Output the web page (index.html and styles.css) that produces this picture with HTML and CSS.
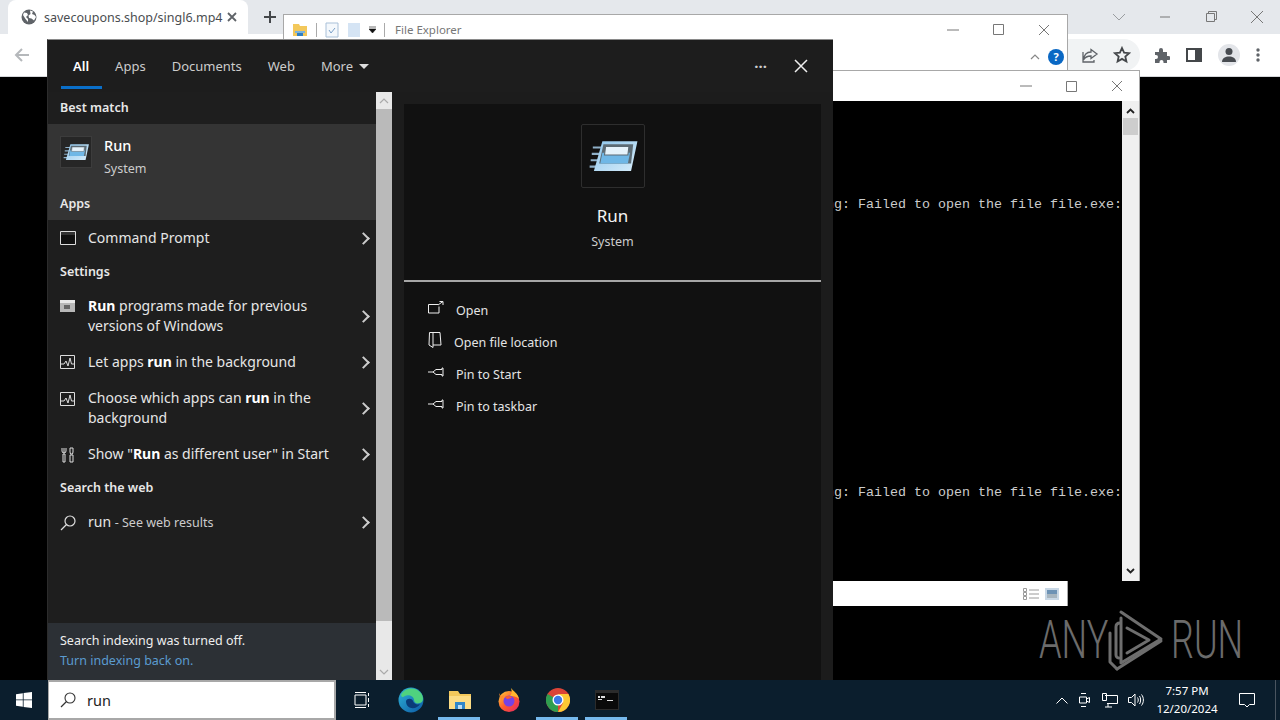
FILE: index.html
```html
<!DOCTYPE html>
<html lang="en">
<head>
  <meta charset="UTF-8">
  <title>Run - Windows Search</title>
  <link rel="stylesheet" href="styles.css">
</head>
<body>
<div class="desktop">

  <!-- browser behind everything -->
  <div class="chrome">
    <div class="tabstrip">
      <div class="tab">
        <svg class="tab-globe" width="16" height="16" viewBox="0 0 16 16"><circle cx="8" cy="8" r="7.5" fill="#5f6368"/><path d="M3 3.5l3 .5 1 2-2 2 2 2v3L4.500 10 2 6zM9 1.500l3 1-1 2.500 2.500 1L15 8l-2 3.500-2.500-2L8 9 7.500 6.500 9.500 5z" fill="#fff"/></svg>
        <span class="tab-title">savecoupons.shop/singl6.mp4</span>
        <svg class="tab-close" width="10" height="10" viewBox="0 0 10 10"><path d="M1 1l8 8M9 1l-8 8" stroke="#5f6368" stroke-width="1.800"/></svg>
      </div>
      <svg class="tab-new" width="14" height="14" viewBox="0 0 14 14"><path d="M7 1v12M1 7h12" stroke="#44474a" stroke-width="2"/></svg>
      <div class="win-btns">
        <svg width="14" height="14" viewBox="0 0 14 14"><path d="M1 4l6 6 6-6" fill="none" stroke="#9a9da0"/></svg>
        <svg width="14" height="14" viewBox="0 0 14 14"><path d="M2 7h10" stroke="#777"/></svg>
        <svg width="14" height="14" viewBox="0 0 14 14"><path d="M2.500 3.500h8v8h-8zM4.500 3.500v-2h8v8h-2" fill="none" stroke="#777"/></svg>
        <svg width="14" height="14" viewBox="0 0 14 14"><path d="M1 1l12 12M13 1L1 13" stroke="#777"/></svg>
      </div>
    </div>
    <div class="toolbar">
      <svg class="back" width="16" height="16" viewBox="0 0 16 16"><path d="M15 8H2M8 2L2 8l6 6" fill="none" stroke="#b5b8bb" stroke-width="2"/></svg>
      <div class="omni-end">
        <svg width="18" height="18" viewBox="0 0 18 18"><path d="M10 3.500l6 4.500-6 4.500V10C6 10 4 11 2.500 14 3 9 5.500 6 10 6zM2 6v10h11v-2" fill="none" stroke="#5f6368" stroke-width="1.300"/></svg>
        <svg width="18" height="18" viewBox="0 0 18 18"><path d="M9 2l2.100 4.700 5 .5-3.800 3.300 1.100 5L9 12.900l-4.400 2.600 1.100-5L1.900 7.200l5-.5z" fill="none" stroke="#44474a" stroke-width="1.800"/></svg>
      </div>
      <div class="tools">
        <svg width="16" height="16" viewBox="0 0 16 16"><path d="M1 5h4V3a2 2 0 0 1 4 0v2h4v4h1.500a2 2 0 0 1 0 4H13v3H9.500v-1a2 2 0 0 0-4 0v1H1v-4h1a2 2 0 0 0 0-4H1z" fill="#5f6368"/></svg>
        <svg width="16" height="16" viewBox="0 0 16 16"><path d="M1 2h14v12H1z" fill="none" stroke="#44474a" stroke-width="2"/><path d="M9 2h6v12H9z" fill="#44474a"/></svg>
        <div class="avatar"><svg width="18" height="18" viewBox="0 0 18 18"><circle cx="9" cy="5.500" r="3.500" fill="#474b50"/><path d="M2 16c0-4 3.500-5.500 7-5.500s7 1.500 7 5.500z" fill="#474b50"/></svg></div>
        <svg width="4" height="14" viewBox="0 0 4 14"><circle cx="2" cy="2" r="1.700" fill="#5f6368"/><circle cx="2" cy="7" r="1.700" fill="#5f6368"/><circle cx="2" cy="12" r="1.700" fill="#5f6368"/></svg>
      </div>
    </div>
  </div>

  <!-- file explorer window -->
  <div class="explorer">
    <div class="ex-title">
      <svg width="16" height="16" viewBox="0 0 16 16"><path d="M1 2h6l1 2h7v10H1z" fill="#f3c85b"/><path d="M5 11h6v3H5z" fill="#2f7fc4"/><path d="M3 9h10v2H3z" fill="#7db4dd"/></svg>
      <span class="ex-sep"></span>
      <svg width="14" height="16" viewBox="0 0 14 16"><path d="M1 1h12v14H1z" fill="#f4f8fc" stroke="#a9c0d8"/><path d="M4 8l2 3 4-5" fill="none" stroke="#7aa0c8"/></svg>
      <svg width="14" height="16" viewBox="0 0 14 16"><path d="M1 1h12v14H1z" fill="#d5e4f4"/></svg>
      <svg width="7" height="7" viewBox="0 0 7 7"><path d="M0 1h7M0 3h7l-3.500 4z" fill="#111" stroke="#111" stroke-width=".6"/></svg>
      <span class="ex-sep"></span>
      <span class="ex-name">File Explorer</span>
      <div class="ex-btns">
        <svg width="12" height="12" viewBox="0 0 12 12"><path d="M0 6h12" stroke="#777"/></svg>
        <svg width="11" height="11" viewBox="0 0 11 11"><path d="M.5.500h10v10H.5z" fill="none" stroke="#777"/></svg>
        <svg width="12" height="12" viewBox="0 0 12 12"><path d="M1 1l10 10M11 1L1 11" stroke="#777"/></svg>
      </div>
    </div>
    <div class="ex-ribbon">
      <svg width="10" height="6" viewBox="0 0 10 6"><path d="M1 5l4-4 4 4" fill="none" stroke="#888" stroke-width="1.200"/></svg>
      <div class="help">?</div>
    </div>
    <div class="ex-spacer"></div>
    <div class="ex-status">
      <svg width="16" height="12" viewBox="0 0 16 12"><path d="M.5.500h3v3h-3zM.5 4.500h3v3h-3zM.5 8.500h3v3h-3zM6 2h10M6 6h10M6 10h10" fill="none" stroke="#9a9a9a"/></svg>
      <svg width="14" height="12" viewBox="0 0 14 12"><path d="M0 0h14v12H0z" fill="#c9d8e6"/><path d="M2 2h10v4H2z" fill="#6e93b5"/><path d="M2 6h10v4H2z" fill="#a7b5bf"/></svg>
    </div>
  </div>

  <!-- console window -->
  <div class="console">
    <div class="con-title">
      <svg width="12" height="12" viewBox="0 0 12 12"><path d="M0 6h12" stroke="#777"/></svg>
      <svg width="11" height="11" viewBox="0 0 11 11"><path d="M.5.500h10v10H.5z" fill="none" stroke="#777"/></svg>
      <svg width="12" height="12" viewBox="0 0 12 12"><path d="M1 1l10 10M11 1L1 11" stroke="#777"/></svg>
    </div>
    <div class="con-body">
      <div class="con-text">
        <div class="con-line con-first">Warning: Failed to open the file file.exe:</div>
        <div class="con-line con-second">Warning: Failed to open the file file.exe:</div>
      </div>
      <div class="con-scroll">
        <svg width="9" height="6" viewBox="0 0 9 6"><path d="M1 5l3.500-3.500L8 5" fill="none" stroke="#222" stroke-width="1.800"/></svg>
        <div class="con-thumb"></div>
        <svg class="con-down" width="9" height="6" viewBox="0 0 9 6"><path d="M1 1l3.500 3.500L8 1" fill="none" stroke="#222" stroke-width="1.800"/></svg>
      </div>
    </div>
  </div>

  <!-- watermark -->
  <div class="watermark">
    <span class="wm-text wm-any">ANY</span>
    <svg width="58" height="62" viewBox="0 0 58 62"><g fill="none" stroke="#6e6e6e" stroke-width="3" stroke-linejoin="round" stroke-linecap="round"><path d="M14 14c-2 0-4 1-4 4v28c0 2 2 3 3 3"/><path d="M11 60L4 53V24"/><path d="M15 3l40 27-40 24V9" /><path d="M21 19l22 12-22 13" /><path d="M11 60l44-28"/></g></svg>
    <span class="wm-text wm-run">RUN</span>
  </div>

  <!-- windows search panel -->
  <div class="search">
    <div class="search-head">
      <nav class="tabs">
        <span class="stab stab-on">All</span>
        <span class="stab">Apps</span>
        <span class="stab">Documents</span>
        <span class="stab">Web</span>
        <span class="stab">More <i class="caret"></i></span>
      </nav>
      <span class="dots">···</span>
      <svg class="head-x" width="16" height="16" viewBox="0 0 16 16"><path d="M2 2l12 12M14 2L2 14" stroke="#eee" stroke-width="1.500"/></svg>
    </div>

    <div class="search-main">
      <div class="results">
        <div class="list">
          <div class="label">Best match</div>
          <div class="selected">
            <div class="best">
              <div class="best-icon">
                <svg width="26" height="18" viewBox="0 0 46 32"><use href="#runicon"/></svg>
              </div>
              <div>
                <div class="best-name">Run</div>
                <div class="best-sub">System</div>
              </div>
            </div>
            <div class="label">Apps</div>
          </div>
          <div class="row">
            <svg class="row-ico" width="16" height="14" viewBox="0 0 16 14"><path d="M.5.500h15v13H.5z" fill="#111" stroke="#ddd"/><path d="M1 1h14v3H1z" fill="#333"/></svg>
            <span class="row-text">Command Prompt</span>
            <i class="chev"></i>
          </div>
          <div class="label">Settings</div>
          <div class="row row-two">
            <svg class="row-ico" width="16" height="12" viewBox="0 0 16 12"><path d="M0 0h15v12H0z" fill="#b8b8b8"/><path d="M0 0h15v3H0z" fill="#e8e8e8"/><path d="M4 5h6v4H4z" fill="#666"/></svg>
            <span class="row-text"><b>Run</b> programs made for previous versions of Windows</span>
            <i class="chev"></i>
          </div>
          <div class="row">
            <svg class="row-ico" width="15" height="14" viewBox="0 0 15 14"><use href="#activity"/></svg>
            <span class="row-text">Let apps <b>run</b> in the background</span>
            <i class="chev"></i>
          </div>
          <div class="row row-two">
            <svg class="row-ico" width="15" height="14" viewBox="0 0 15 14"><use href="#activity"/></svg>
            <span class="row-text">Choose which apps can <b>run</b> in the background</span>
            <i class="chev"></i>
          </div>
          <div class="row">
            <svg class="row-ico" width="15" height="16" viewBox="0 0 15 16"><path d="M4 1v5M2 1v3a2 2 0 0 0 4 0V1M3 7h2v8H3zM10 1h3v4l-.5 2h-2L10 5zM10 8h3v7h-3z" fill="none" stroke="#ddd"/></svg>
            <span class="row-text">Show "<b>Run</b> as different user" in Start</span>
            <i class="chev"></i>
          </div>
          <div class="label">Search the web</div>
          <div class="row">
            <svg class="row-ico" width="16" height="16" viewBox="0 0 16 16"><circle cx="10" cy="6" r="5" fill="none" stroke="#ddd" stroke-width="1.200"/><path d="M6.500 9.500L1 15" stroke="#ddd" stroke-width="1.200"/></svg>
            <span class="row-text">run <small>- See web results</small></span>
            <i class="chev"></i>
          </div>
        </div>
        <div class="notice">
          <div>Search indexing was turned off.</div>
          <div class="notice-link">Turn indexing back on.</div>
        </div>
      </div>

      <div class="scrollbar">
        <div class="sb-btn"><svg width="10" height="6" viewBox="0 0 10 6"><path d="M1 5l4-4 4 4" fill="none" stroke="#aaa" stroke-width="1.200"/></svg></div>
        <div class="sb-thumb"></div>
        <div class="sb-btn sb-end"><svg width="10" height="6" viewBox="0 0 10 6"><path d="M1 1l4 4 4-4" fill="none" stroke="#aaa" stroke-width="1.200"/></svg></div>
      </div>

      <div class="detail-wrap">
        <div class="detail">
          <div class="detail-icon">
            <svg width="50" height="34" viewBox="0 0 46 32"><use href="#runicon"/></svg>
          </div>
          <div class="detail-name">Run</div>
          <div class="detail-sub">System</div>
          <div class="detail-line"></div>
          <div class="action">
            <svg width="16" height="14" viewBox="0 0 16 14"><path d="M11 5.500v6.500H.5V3.500H10M10 4l5-3.500M11.500.500H15V4" fill="none" stroke="#eee"/></svg>
            <span>Open</span>
          </div>
          <div class="action">
            <svg width="14" height="16" viewBox="0 0 14 16"><path d="M1.500.500H12L13 13H5V.500M1.500.500L1 13l4 2.500V13" fill="none" stroke="#eee"/></svg>
            <span>Open file location</span>
          </div>
          <div class="action">
            <svg width="16" height="10" viewBox="0 0 16 10"><use href="#pin"/></svg>
            <span>Pin to Start</span>
          </div>
          <div class="action">
            <svg width="16" height="10" viewBox="0 0 16 10"><use href="#pin"/></svg>
            <span>Pin to taskbar</span>
          </div>
        </div>
      </div>
    </div>
  </div>

  <!-- taskbar -->
  <div class="taskbar">
    <svg class="start" width="16" height="16" viewBox="0 0 16 16"><path d="M0 2.200l6.800-1v6.300H0zM7.600 1.100L16 0v7.500H7.600zM0 8.300h6.800v6.400L0 13.700zM7.600 8.300H16V16l-8.400-1.100z" fill="#fff"/></svg>
    <div class="tb-search">
      <svg width="16" height="16" viewBox="0 0 16 16"><circle cx="10" cy="6" r="5" fill="none" stroke="#333" stroke-width="1.100"/><path d="M6.500 9.500L1 15" stroke="#333" stroke-width="1.200"/></svg>
      <span>run</span>
    </div>
    <div class="tb-apps">
      <div class="tb-app"><svg width="16" height="16" viewBox="0 0 16 16"><path d="M1 3h11v10H1zM1 .500h11M1 15.500h11M14.500 1v3M14.500 6v4M14.500 12v3" fill="none" stroke="#fff"/></svg></div>
      <div class="tb-app"><svg width="26" height="26" viewBox="0 0 26 26"><defs><linearGradient id="edge" x1="0" y1="0" x2="1" y2="1"><stop offset="0" stop-color="#2fb4d8"/><stop offset="1" stop-color="#0c59a4"/></linearGradient></defs><circle cx="13" cy="13" r="12.500" fill="url(#edge)"/><path d="M3 8C6 1 16-1 22 5c4 4 4 10 0 11-3 1-6 0-6-3 0-4-6-6-9-4-2 1-3 2-4-1z" fill="#4fd27f"/><path d="M8 14c1-3 6-3 7 0 1 3 4 4 7 3-3 6-14 6-14-3z" fill="#0a3c78"/></svg></div>
      <div class="tb-app tb-on"><svg width="24" height="20" viewBox="0 0 24 20"><path d="M1 1h9l2 3h11v15H1z" fill="#f3c85b"/><path d="M1 6h22v13H1z" fill="#fcdc84"/><path d="M7 12h10v7H7z" fill="#2f86c9"/><path d="M10 15h4v4h-4z" fill="#bcdcf2"/></svg></div>
      <div class="tb-app"><svg width="24" height="24" viewBox="0 0 24 24"><defs><linearGradient id="fox" x1="0" y1="0" x2="1" y2="1"><stop offset="0" stop-color="#ffd23a"/><stop offset=".5" stop-color="#ff5a2c"/><stop offset="1" stop-color="#e2236c"/></linearGradient></defs><circle cx="12" cy="13.500" r="10.500" fill="url(#fox)"/><path d="M14 0c2 3 7 5 8 11-3-3-6-3-9-3 2-2 2-5 1-8z" fill="#ffb52e"/><path d="M2 5l2 3 3-1-3 6z" fill="#ff8c2a"/><circle cx="12" cy="13" r="5.500" fill="#7542e5"/><path d="M8 9c3-2 6-1 7 1-2 0-3 1-5 1z" fill="#ff5a2c"/></svg></div>
      <div class="tb-app tb-on"><svg width="24" height="24" viewBox="0 0 24 24"><circle cx="12" cy="12" r="12" fill="#db4437"/><path d="M12 12L1.600 6A12 12 0 0 0 12 24z" fill="#2f9e4f"/><path d="M12 6h10.400A12 12 0 0 1 12 24l5-9z" fill="#fcc934"/><circle cx="12" cy="12" r="5.500" fill="#fff"/><circle cx="12" cy="12" r="4.200" fill="#3b78e7"/></svg></div>
      <div class="tb-app tb-on"><svg width="24" height="20" viewBox="0 0 24 20"><path d="M0 0h24v20H0z" fill="#2b2b2b"/><path d="M1 3h22v16H1z" fill="#0a0a0a"/><path d="M3 6h2v2H3zM6 6h4v2H6zM3 9h4v1H3zM12 10h6v1h-6z" fill="#ddd"/></svg></div>
    </div>
    <div class="tray">
      <svg width="12" height="7" viewBox="0 0 12 7"><path d="M.5 6.500L6 1l5.500 5.500" fill="none" stroke="#fff"/></svg>
      <svg width="14" height="16" viewBox="0 0 14 16"><path d="M1.500 5h7v6h-7zM8.500 7l3-1.500v5L8.500 9M3 1.500h5M3 14.500h5" fill="none" stroke="#fff"/></svg>
      <svg width="16" height="15" viewBox="0 0 16 15"><path d="M3 2.500h12.500v8H5M6 10.500V14M3 14h7M.5.500h4v7h-4z" fill="none" stroke="#fff"/></svg>
      <svg width="16" height="14" viewBox="0 0 16 14"><path d="M.5 4.500h3L7 1v12L3.500 9.500h-3zM9.500 4.500c1 1.500 1 3.500 0 5M11.500 3c1.500 2 1.500 6 0 8M13.500 1.500c2.500 3 2.500 8 0 11" fill="none" stroke="#fff"/></svg>
    </div>
    <div class="clock"><div>7:57 PM</div><div>12/20/2024</div></div>
    <svg class="notif" width="16" height="15" viewBox="0 0 16 15"><path d="M.5.500h15v11h-5L8 14l-2.500-2.500h-5z" fill="none" stroke="#fff"/></svg>
    <div class="show-desktop"></div>
  </div>

  <!-- shared icon shapes -->
  <svg class="defs" width="0" height="0">
    <defs>
      <linearGradient id="rungrad" x1="0" y1="0" x2="1" y2="1"><stop offset="0" stop-color="#8ec6ec"/><stop offset="1" stop-color="#d6ecfa"/></linearGradient>
      <g id="runicon">
        <path d="M0 8h10M-1 14h9M-2 20h9M-3 26h9" stroke="#8fb0c8" stroke-width="2" transform="translate(4 0)"/>
        <path d="M13 2h33l-6 28H5z" fill="url(#rungrad)"/>
        <path d="M14 5h28l-2 18H10z" fill="#5c6b74"/>
        <path d="M13 13h26l-2 10H11z" fill="#6fb7e6"/>
        <path d="M16 7h22l-1 8H15z" fill="#e6f3fb" stroke="#5c6b74"/>
      </g>
      <g id="activity">
        <path d="M.5.500h14v13H.5z" fill="none" stroke="#ddd"/>
        <path d="M1 9h3l2-3 2 5 2-8 1.500 6H14" fill="none" stroke="#ddd"/>
      </g>
      <g id="pin">
        <path d="M0 5h5M5 5l3-2.500h6V1h1v8h-1V7.500H8z" fill="none" stroke="#eee"/>
      </g>
    </defs>
  </svg>
</div>
</body>
</html>
```

FILE: styles.css
```css
* { box-sizing: border-box; }

body {
  margin: 0;
  background: #000;
  font-family: "Noto Sans", "Open Sans", sans-serif;
}

svg { display: block; flex: none; }

.desktop {
  position: relative;
  width: 1280px;
  height: 720px;
  overflow: hidden;
  background: #000;
}

/* browser */
.chrome {
  position: absolute;
  left: 0;
  top: 0;
  width: 1280px;
  height: 77px;
  background: #fff;
  border-bottom: 1px solid #d5d7da;
}
.tabstrip {
  height: 34px;
  background: #e5e8ec;
  display: flex;
  align-items: center;
  padding-left: 8px;
}
.tab {
  width: 240px;
  height: 34px;
  background: #fff;
  border-radius: 8px 8px 0 0;
  display: flex;
  align-items: center;
  padding: 0 11px 0 13px;
}
.tab-title {
  margin-left: 7px;
  font-size: 12.500px;
  color: #4a4d50;
  white-space: nowrap;
  flex: 1;
}
.tab-new { margin-left: 15px; }
.win-btns {
  margin-left: auto;
  display: flex;
  gap: 32px;
  padding-right: 16px;
}
.toolbar {
  height: 42px;
  display: flex;
  align-items: center;
  padding-left: 14px;
}
.omni-end {
  margin-left: auto;
  width: 72px;
  height: 32px;
  background: #f1f3f4;
  border-radius: 0 16px 16px 0;
  display: flex;
  align-items: center;
  gap: 14px;
  padding-left: 13px;
}
.tools {
  display: flex;
  align-items: center;
  gap: 16px;
  margin-left: 14px;
  padding-right: 20px;
}
.avatar {
  width: 22px;
  height: 22px;
  border-radius: 50%;
  background: #e3e5e9;
  display: flex;
  align-items: center;
  justify-content: center;
}

/* file explorer */
.explorer {
  position: absolute;
  left: 283px;
  top: 14px;
  width: 785px;
  height: 592px;
  background: #fff;
  border: 1px solid #a8a8a8;
  border-bottom: 0;
  display: flex;
  flex-direction: column;
}
.ex-title {
  height: 29px;
  display: flex;
  align-items: center;
  gap: 8px;
  padding: 0 17px 0 8px;
}
.ex-sep { width: 1px; height: 14px; background: #aaa; }
.ex-name { font-size: 11.500px; color: #777; margin-left: 2px; }
.ex-btns {
  margin-left: auto;
  display: flex;
  align-items: center;
  gap: 34px;
}
.ex-ribbon {
  height: 26px;
  display: flex;
  align-items: center;
  justify-content: flex-end;
  gap: 8px;
  padding-right: 3px;
}
.help {
  width: 16px;
  height: 16px;
  border-radius: 50%;
  background: #0a68c4;
  color: #fff;
  font-size: 11px;
  font-weight: 700;
  line-height: 16px;
  text-align: center;
}
.ex-spacer { flex: 1; }
.ex-status {
  height: 24px;
  display: flex;
  align-items: center;
  justify-content: flex-end;
  gap: 6px;
  padding-right: 8px;
}

/* console */
.console {
  position: absolute;
  left: 832px;
  top: 70px;
  width: 308px;
  height: 511px;
  background: #fff;
  border: 1px solid #a8a8a8;
  border-left: 0;
  border-bottom: 0;
  display: flex;
  flex-direction: column;
}
.con-title {
  height: 30px;
  display: flex;
  align-items: center;
  justify-content: flex-end;
  gap: 34px;
  padding-right: 16px;
}
.con-body { flex: 1; display: flex; min-height: 0; }
.con-text {
  flex: 1;
  min-width: 0;
  background: #000;
  overflow: hidden;
  color: #ccc;
  font-family: "Liberation Mono", monospace;
  font-size: 13.330px;
  line-height: 16px;
}
.con-line {
  display: flex;
  justify-content: flex-end;
  white-space: nowrap;
}
.con-first { margin-top: 96px; }
.con-second { margin-top: 272px; }
.con-scroll {
  width: 17px;
  background: #f0f0f0;
  display: flex;
  flex-direction: column;
  align-items: center;
  padding: 7px 0;
}
.con-thumb {
  width: 15px;
  height: 17px;
  background: #cdcdcd;
  margin-top: 4px;
}
.con-down { margin-top: auto; }

/* watermark */
.watermark {
  position: absolute;
  left: 1039px;
  top: 609px;
  width: 192px;
  height: 62px;
  display: flex;
  align-items: center;
  justify-content: space-between;
}
.wm-text {
  width: 60px;
  color: #6b6b6b;
  font-family: Roboto, sans-serif;
  font-weight: 300;
  font-size: 53px;
  line-height: 62px;
  white-space: nowrap;
  transform: scaleX(.68);
}
.wm-any { transform-origin: left center; }
.wm-run { transform-origin: left center; }

/* search panel */
.search {
  position: absolute;
  left: 47px;
  top: 39px;
  width: 786px;
  height: 641px;
  background: #1d1d1d;
  border-top: 1px solid #8a8a8a;
  border-left: 1px solid #2c2c2c;
  display: flex;
  flex-direction: column;
  color: #eee;
}
.search-head {
  height: 52px;
  display: flex;
  align-items: center;
  padding-right: 24px;
  flex: none;
}
.tabs {
  display: flex;
  gap: 26px;
  padding-left: 25px;
  font-size: 13px;
  color: #ccc;
  margin-right: auto;
}
.stab { position: relative; white-space: nowrap; }
.stab-on { color: #fff; font-weight: 600; }
.stab-on::after {
  content: "";
  position: absolute;
  left: -12px;
  right: -13px;
  top: 29px;
  height: 3px;
  background: #0a6fc9;
}
.caret {
  display: inline-block;
  width: 0;
  height: 0;
  margin-left: 3px;
  vertical-align: 2px;
  border-left: 5px solid transparent;
  border-right: 5px solid transparent;
  border-top: 5px solid #ddd;
}
.dots { color: #ccc; font-size: 15px; font-weight: 700; margin-right: 26px; letter-spacing: 0; }

.search-main { flex: 1; display: flex; min-height: 0; }
.results {
  width: 328px;
  display: flex;
  flex-direction: column;
  background: #1e1e1e;
}
.list { flex: 1; }
.label {
  height: 32px;
  line-height: 32px;
  padding-left: 12px;
  font-size: 12.500px;
  font-weight: 600;
  color: #e8e8e8;
}
.selected { background: #343434; }
.best {
  height: 64px;
  display: flex;
  align-items: flex-start;
  gap: 12px;
  padding: 12px 0 0 12px;
}
.best-icon {
  width: 32px;
  height: 32px;
  background: #262626;
  border: 1px solid #3c3c3c;
  display: flex;
  align-items: center;
  justify-content: center;
}
.best-name { font-size: 14.500px; line-height: 18px; color: #fff; font-weight: 500; }
.best-sub { font-size: 12.500px; line-height: 18px; margin-top: 6px; color: #ccc; }
.row {
  min-height: 36px;
  display: flex;
  align-items: center;
  padding: 0 5px 0 40px;
  position: relative;
  font-size: 14px;
  line-height: 20px;
  color: #e6e6e6;
}
.row-two { min-height: 56px; }
.row-ico { position: absolute; left: 12px; top: 11px; }
.row-two .row-ico { top: 12px; }
.row-text { flex: 1; padding-right: 30px; }
.row-text b { font-weight: 700; color: #fff; }
.row-text small { font-size: 12.500px; color: #ccc; }
.chev {
  width: 9px;
  height: 9px;
  margin-right: 3px;
  border-top: 2px solid #ccc;
  border-right: 2px solid #ccc;
  transform: rotate(45deg);
  flex: none;
}
.notice {
  height: 57px;
  background: #2c3035;
  padding: 8px 12px 0;
  font-size: 12.500px;
  line-height: 20px;
  color: #eee;
  flex: none;
}
.notice-link { color: #5b9bd0; }

.scrollbar {
  width: 16px;
  display: flex;
  flex-direction: column;
  background: #e8e8e8;
}
.sb-btn {
  height: 17px;
  display: flex;
  align-items: center;
  justify-content: center;
  flex: none;
}
.sb-thumb { flex: 1; background: #bababa; }
.sb-end { height: 59px; align-items: flex-end; padding-bottom: 5px; }

.detail-wrap { flex: 1; padding: 12px 12px 0; background: #1c1c1c; }
.detail {
  height: 100%;
  background: #111;
  display: flex;
  flex-direction: column;
  align-items: center;
  padding-top: 20px;
}
.detail-icon {
  width: 64px;
  height: 64px;
  border: 1px solid #2e2e2e;
  border-radius: 2px;
  display: flex;
  align-items: center;
  justify-content: center;
}
.detail-name { font-size: 17px; line-height: 24px; margin-top: 16px; color: #f4f4f4; }
.detail-sub { font-size: 12.500px; line-height: 18px; margin-top: 5px; color: #ccc; }
.detail-line {
  width: 100%;
  height: 2px;
  background: #a6a6a6;
  margin: 29px 0 12px;
}
.action {
  align-self: stretch;
  height: 32px;
  display: flex;
  align-items: center;
  gap: 12px;
  padding-left: 24px;
  font-size: 12.500px;
  color: #e4e4e4;
}
.action svg { margin-bottom: 4px; }

/* taskbar */
.taskbar {
  position: absolute;
  left: 0;
  top: 680px;
  width: 1280px;
  height: 40px;
  background: #0b1e2d;
  display: flex;
  align-items: center;
  color: #fff;
}
.start { margin-left: 16px; }
.tb-search {
  margin-left: 16px;
  width: 288px;
  height: 40px;
  background: #fff;
  border: 2px solid #a8a8a8;
  border-left-width: 1px;
  display: flex;
  align-items: center;
  gap: 11px;
  padding-left: 11px;
  color: #222;
  font-size: 14.500px;
}
.tb-apps { display: flex; margin-left: 1px; }
.tb-app {
  width: 49px;
  height: 40px;
  display: flex;
  align-items: center;
  justify-content: center;
  border-bottom: 3px solid transparent;
  padding-top: 3px;
}
.tb-on { border-image: linear-gradient(to right, transparent 4px, #76b9ed 4px, #76b9ed 44px, transparent 44px) 1; }
.tray {
  margin-left: auto;
  display: flex;
  align-items: center;
  gap: 10px;
}
.clock {
  width: 76px;
  margin-left: 5px;
  text-align: center;
  font-size: 11.500px;
  line-height: 18px;
}
.notif { margin-left: 14px; margin-right: 25px; }
.show-desktop {
  position: absolute;
  right: 4px;
  top: 0;
  width: 1px;
  height: 40px;
  background: #4a5560;
}
.defs { position: absolute; }
```
